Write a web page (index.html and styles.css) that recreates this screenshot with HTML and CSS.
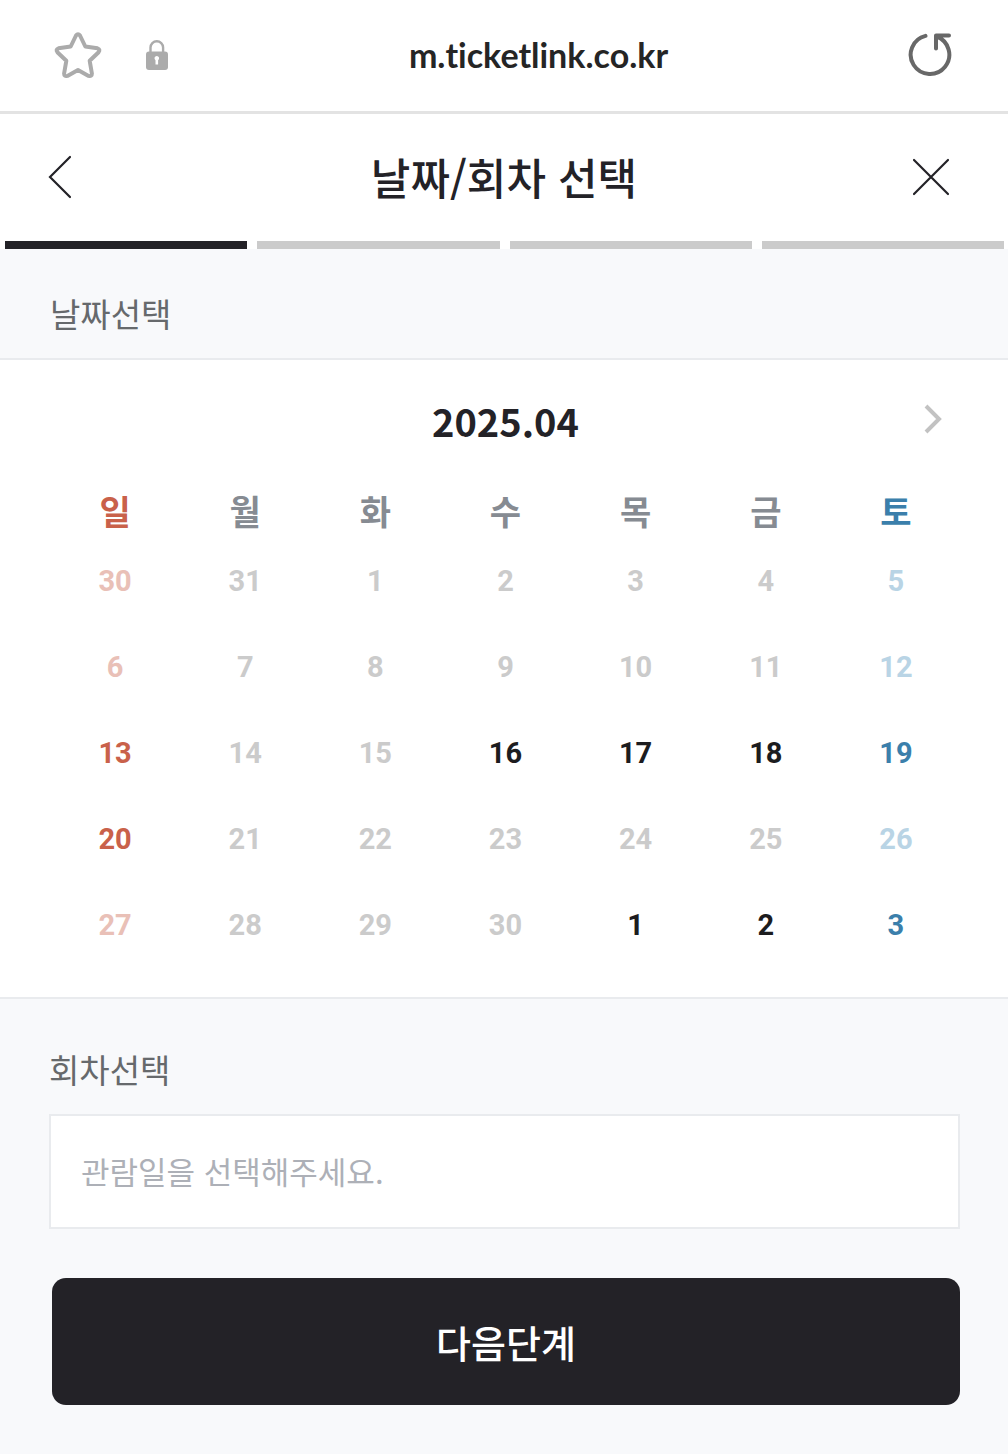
FILE: index.html
```html
<!DOCTYPE html>
<html lang="ko">
<head>
<meta charset="utf-8">
<meta name="viewport" content="width=device-width, initial-scale=1">
<title>날짜/회차 선택</title>
<link rel="stylesheet" href="styles.css">
</head>
<body>
<div class="browser-bar">
  <button class="icon-button" type="button" aria-label="즐겨찾기">
    <svg width="48" height="48" viewBox="0 0 48 48" fill="none" stroke="#ababab" stroke-width="4" stroke-linejoin="round"><path d="M22 4.500Q24 1.800 26 4.500L31.300 15.500L43.500 17.300Q46.600 18.400 44.600 21.200L35.700 29.800L37.900 42.500Q37.900 45.800 34.600 44.900L24 39L13.400 44.900Q10.100 45.800 10.100 42.500L12.300 29.800L3.400 21.200Q1.400 18.400 4.500 17.300L16.700 15.500Z"/></svg>
  </button>
  <svg class="lock" width="24" height="32" viewBox="0 0 24 32" role="img" aria-label="보안 연결"><path d="M5.500 14V8.500a6.300 6.300 0 0 1 12.600 0V14" fill="none" stroke="#ababab" stroke-width="2.400"/><rect x="1" y="12.500" width="22" height="18.500" rx="3" fill="#ababab"/><path d="M11.800 17a2.300 2.300 0 0 1 1.300 4.200v4.300h-2.600v-4.300a2.300 2.300 0 0 1 1.300-4.200z" fill="#fff"/></svg>
  <span class="address">m.ticketlink.co.kr</span>
  <button class="icon-button" type="button" aria-label="새로고침">
    <svg width="44" height="44" viewBox="0 0 44 44" fill="none" stroke="#686868" stroke-width="4" stroke-linecap="round" stroke-linejoin="round"><path d="M17.500 2.900A19.300 19.300 0 1 0 28.500 3.500M28 15.500V2.500H41"/></svg>
  </button>
</div>

<header class="page-header">
  <button class="icon-button back" type="button" aria-label="이전">
    <svg width="24" height="44" viewBox="0 0 24 44" fill="none" stroke="#232227" stroke-width="2.200" stroke-linecap="round"><path d="M22 2L2 22L22 42"/></svg>
  </button>
  <h1 class="page-title">날짜/회차 선택</h1>
  <button class="icon-button close" type="button" aria-label="닫기">
    <svg width="38" height="38" viewBox="0 0 38 38" fill="none" stroke="#232227" stroke-width="2.200" stroke-linecap="round"><path d="M2 2L36 36M36 2L2 36"/></svg>
  </button>
</header>

<ol class="steps" aria-label="예매 단계">
  <li class="step step-current" aria-current="step"></li>
  <li class="step"></li>
  <li class="step"></li>
  <li class="step"></li>
</ol>

<main>
  <h2 class="section-label date-label">날짜선택</h2>

  <section class="calendar">
    <div class="month-bar">
      <h3 class="month">2025.04</h3>
      <button class="icon-button next-month" type="button" aria-label="다음 달">
        <svg width="18" height="30" viewBox="0 0 18 30" fill="none" stroke="#c2c2c2" stroke-width="4"><path d="M2 2L15 15L2 28"/></svg>
      </button>
    </div>
    <table class="days">
      <thead>
        <tr><th class="sun">일</th><th>월</th><th>화</th><th>수</th><th>목</th><th>금</th><th class="sat">토</th></tr>
      </thead>
      <tbody>
        <tr>
          <td class="sun"><button class="day" disabled>30</button></td><td><button class="day" disabled>31</button></td><td><button class="day" disabled>1</button></td><td><button class="day" disabled>2</button></td><td><button class="day" disabled>3</button></td><td><button class="day" disabled>4</button></td><td class="sat"><button class="day" disabled>5</button></td>
        </tr>
        <tr>
          <td class="sun"><button class="day" disabled>6</button></td><td><button class="day" disabled>7</button></td><td><button class="day" disabled>8</button></td><td><button class="day" disabled>9</button></td><td><button class="day" disabled>10</button></td><td><button class="day" disabled>11</button></td><td class="sat"><button class="day" disabled>12</button></td>
        </tr>
        <tr>
          <td class="sun"><button class="day">13</button></td><td><button class="day" disabled>14</button></td><td><button class="day" disabled>15</button></td><td><button class="day">16</button></td><td><button class="day">17</button></td><td><button class="day">18</button></td><td class="sat"><button class="day">19</button></td>
        </tr>
        <tr>
          <td class="sun"><button class="day">20</button></td><td><button class="day" disabled>21</button></td><td><button class="day" disabled>22</button></td><td><button class="day" disabled>23</button></td><td><button class="day" disabled>24</button></td><td><button class="day" disabled>25</button></td><td class="sat"><button class="day" disabled>26</button></td>
        </tr>
        <tr>
          <td class="sun"><button class="day" disabled>27</button></td><td><button class="day" disabled>28</button></td><td><button class="day" disabled>29</button></td><td><button class="day" disabled>30</button></td><td><button class="day">1</button></td><td><button class="day">2</button></td><td class="sat"><button class="day">3</button></td>
        </tr>
      </tbody>
    </table>
  </section>

  <form class="round">
    <label class="section-label" for="round">회차선택</label>
    <input class="round-field" id="round" type="text" placeholder="관람일을 선택해주세요." readonly>
    <button class="submit" type="button">다음단계</button>
  </form>
</main>
</body>
</html>
```
FILE: styles.css
```css
* {
  box-sizing: border-box;
}

body {
  margin: 0;
  min-height: 100vh;
  background: #f8f9fb;
  color: #232227;
  font-family: "Noto Sans CJK KR", sans-serif;
}

button,
input {
  font: inherit;
}

h1,
h2,
h3 {
  margin: 0;
}

svg {
  display: block;
}

.icon-button {
  padding: 0;
  border: 0;
  background: none;
}

.browser-bar {
  display: flex;
  align-items: center;
  height: 114px;
  padding: 0 56px 2px 54px;
  border-bottom: 3px solid #e3e3e3;
  background: #fff;
}

.lock {
  margin-left: 43px;
}

.address {
  flex: 1;
  text-align: center;
  color: #252525;
  font: 700 34px/40px Lato, sans-serif;
  font-variant-ligatures: none;
}

.page-header {
  display: grid;
  grid-template-columns: 1fr auto 1fr;
  align-items: center;
  height: 127px;
  padding: 0 48px 2px;
  background: #fff;
}

.back {
  justify-self: start;
}

.close {
  justify-self: end;
  padding-right: 10px;
}

.page-title {
  padding-bottom: 2px;
  font-size: 43px;
  font-weight: 500;
  line-height: 64px;
}

.steps {
  display: flex;
  gap: 10px;
  margin: 0;
  padding: 0 4px 0 5px;
  list-style: none;
  background: #fff;
}

.step {
  flex: 1;
  height: 8px;
  background: #cbcbcb;
}

.step-current {
  background: #232227;
}

.section-label {
  display: block;
  color: #66696c;
  font-size: 33px;
  font-weight: 400;
  line-height: 48px;
}

.date-label {
  padding: 40px 50px 21px;
}

.calendar {
  padding: 0 47px 29px 50px;
  border: solid #e9ebee;
  border-width: 2px 0;
  background: #fff;
}

.month-bar {
  display: grid;
  grid-template-columns: 1fr auto 1fr;
  align-items: center;
  height: 128px;
}

.month {
  grid-column: 2;
  padding-bottom: 6px;
  font-size: 38px;
  font-weight: 700;
  line-height: 56px;
}

.next-month {
  justify-self: end;
  align-self: start;
  height: 118px;
  padding-right: 19px;
}

.days {
  width: 100%;
  table-layout: fixed;
  border-collapse: collapse;
}

.days th,
.days td {
  padding: 0;
  text-align: center;
}

.days th {
  height: 50px;
  color: #868b92;
  font-size: 34px;
  font-weight: 700;
  line-height: 46px;
  vertical-align: top;
}

.day {
  display: block;
  width: 100%;
  height: 86px;
  padding: 0;
  border: 0;
  background: none;
  color: #1c1c1e;
  font: 700 29px/86px Roboto, sans-serif;
}

.day:disabled {
  color: #cbcbcb;
}

.days .sun,
.sun .day {
  color: #c9614a;
}

.days .sat,
.sat .day {
  color: #3b7fab;
}

.sun .day:disabled {
  color: #e9c0b7;
}

.sat .day:disabled {
  color: #b9d4e5;
}

.round {
  padding: 46px 48px 49px 49px;
}

.round-field {
  display: block;
  width: 100%;
  height: 115px;
  margin-top: 21px;
  padding: 0 30px 2px;
  border: 2px solid #e9ebee;
  border-radius: 0;
  background: #fff;
  font-size: 31px;
}

.round-field::placeholder {
  color: #adb0b7;
  opacity: 1;
}

.submit {
  display: block;
  width: calc(100% - 3px);
  height: 127px;
  margin: 49px 0 0 3px;
  border: 0;
  border-radius: 14px;
  background: #232227;
  color: #fff;
  font-size: 38px;
  font-weight: 500;
}
```
